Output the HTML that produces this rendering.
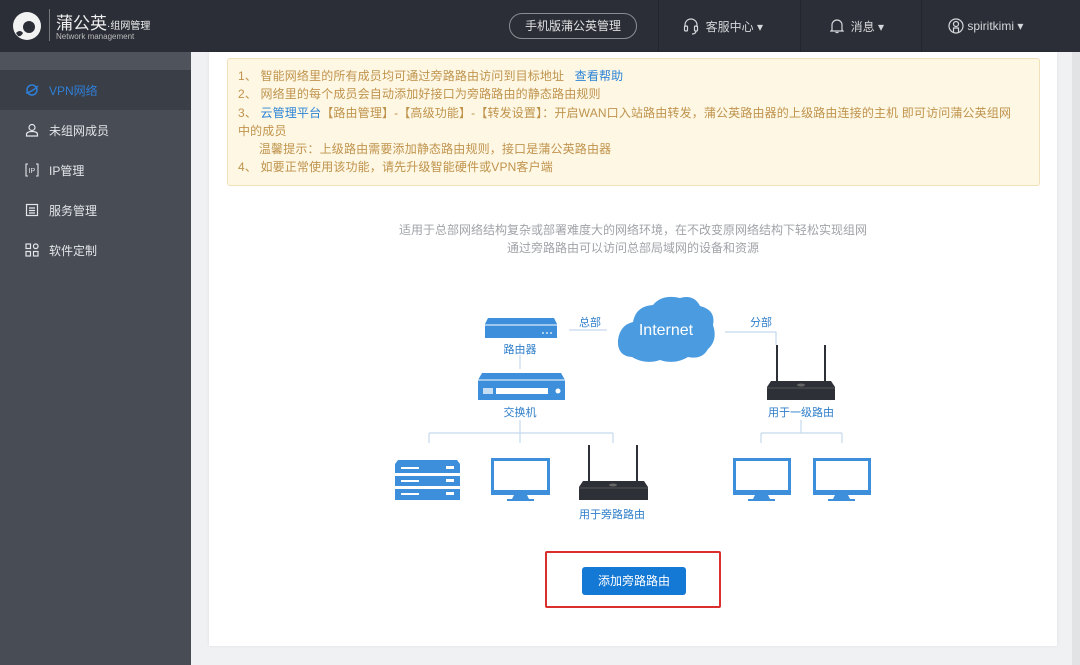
<!DOCTYPE html>
<html><head><meta charset="utf-8"><style>
*{margin:0;padding:0;box-sizing:border-box}
body{width:1080px;height:665px;overflow:hidden;background:#f0f1f3;font-family:"Liberation Sans","Noto Sans CJK SC",sans-serif;position:relative}
.hdr{position:absolute;left:0;top:0;width:1080px;height:52px;background:#2b2e37}
.side{position:absolute;left:0;top:52px;width:191px;height:613px;background:#474c55}
.side .strip{height:18px;background:#4f545c}
.item{height:40px;display:flex;align-items:center;padding-left:25px;color:#e4e6e9;font-size:12px}
.item.act{background:#3a3e46;color:#2f7fd8}
.item svg{margin-right:10px}
.card{position:absolute;left:209px;top:52px;width:848px;height:594px;background:#fff;box-shadow:0 0 3px rgba(0,0,0,.08)}
.note{position:absolute;left:227px;top:58px;width:813px;height:128px;background:#fdf7e4;border:1px solid #f1e1b8;border-radius:3px;padding:8px 10px;font-size:12px;line-height:18.3px;color:#c0934c;white-space:nowrap;letter-spacing:0.15px}
.note a{color:#2c84d6}
.desc{position:absolute;left:209px;width:848px;text-align:center;font-size:12px;color:#a0a3a8}
.lbl{position:absolute;font-size:11px;color:#2e7ec9;transform:translateX(-50%);white-space:nowrap}
.btn{position:absolute;left:582px;top:567px;width:104px;height:28px;background:#1479d5;border-radius:3px;color:#fff;font-size:12px;text-align:center;line-height:28px}
.red{position:absolute;left:545px;top:551px;width:176px;height:57px;border:2px solid #d9302e;border-radius:2px}
.nav{position:absolute;top:0;height:52px;display:flex;align-items:center;color:#d5d7da;font-size:12px}
.sep{position:absolute;top:0;width:1px;height:52px;background:#24262d}
</style></head><body>
<div class="hdr">
  <svg style="position:absolute;left:12px;top:11px" width="30" height="30" viewBox="0 0 30 30"><circle cx="15" cy="15" r="14" fill="#f2f2f2"/><circle cx="17" cy="16" r="6" fill="#2b2e37"/><path d="M4 22 Q8 18 11 22 Q9 26 6 25Z" fill="#2b2e37"/></svg>
  <div style="position:absolute;left:49px;top:9px;width:1px;height:32px;background:#777"></div>
  <div style="position:absolute;left:56px;top:9px;color:#eee;font-size:17px">蒲公英<span style="font-size:10px">·组网管理</span></div>
  <div style="position:absolute;left:56px;top:32px;color:#bbb;font-size:8px">Network management</div>
  <div style="position:absolute;left:509px;top:13px;width:128px;height:26px;border:1px solid #8a8c91;border-radius:13px;color:#e0e0e0;font-size:12px;text-align:center;line-height:24px">手机版蒲公英管理</div>
  <div class="sep" style="left:658px"></div><div class="sep" style="left:800px"></div><div class="sep" style="left:921px"></div>
  <div class="nav" style="left:683px"><svg width="16" height="18" viewBox="0 0 16 18" fill="none" stroke="#d5d7da" stroke-width="1.2"><path d="M2 10V8a6 6 0 0 1 12 0v2"/><rect x="1.5" y="9" width="3" height="5" rx="1"/><rect x="11.5" y="9" width="3" height="5" rx="1"/><path d="M13 14q0 3-4 3"/></svg>&nbsp;&nbsp;客服中心 ▾</div>
  <div class="nav" style="left:830px"><svg width="14" height="16" viewBox="0 0 14 16" fill="none" stroke="#d5d7da" stroke-width="1.2"><path d="M2 12V7a5 5 0 0 1 10 0v5l1 1H1z"/><path d="M5.5 14.5h3"/></svg>&nbsp;&nbsp;消息 ▾</div>
  <div class="nav" style="left:948px"><svg width="16" height="16" viewBox="0 0 16 16" fill="none" stroke="#d5d7da" stroke-width="1.2"><circle cx="8" cy="8" r="7"/><circle cx="8" cy="6" r="2.5"/><path d="M5.5 14V10h5v4"/></svg>&nbsp;spiritkimi ▾</div>
</div>
<div class="side">
  <div class="strip"></div>
  <div class="item act"><svg width="14" height="14" viewBox="0 0 14 14" fill="none" stroke="#2f7fd8" stroke-width="1.5"><circle cx="7" cy="7" r="5"/><path d="M1 10Q7 9 13 3"/></svg>VPN网络</div>
  <div class="item"><svg width="14" height="14" viewBox="0 0 14 14" fill="none" stroke="#e4e6e9" stroke-width="1.2"><circle cx="7" cy="4.5" r="3"/><path d="M1.5 13v-1.5q0-3 5.5-3t5.5 3V13z"/></svg>未组网成员</div>
  <div class="item"><svg width="14" height="14" viewBox="0 0 14 14" fill="none" stroke="#e4e6e9" stroke-width="1.1"><path d="M3 1H1v12h2M11 1h2v12h-2"/><text x="3.5" y="10" font-size="7" fill="#e4e6e9" stroke="none">IP</text></svg>IP管理</div>
  <div class="item"><svg width="14" height="14" viewBox="0 0 14 14" fill="none" stroke="#e4e6e9" stroke-width="1.2"><rect x="1.5" y="1.5" width="11" height="11"/><path d="M4 5h6M4 7.5h6M4 10h6"/></svg>服务管理</div>
  <div class="item"><svg width="14" height="14" viewBox="0 0 14 14" fill="none" stroke="#e4e6e9" stroke-width="1.2"><rect x="1" y="1" width="4.5" height="4.5"/><rect x="8.5" y="1" width="4.5" height="4.5" rx="2"/><rect x="1" y="8.5" width="4.5" height="4.5"/><rect x="8.5" y="8.5" width="4.5" height="4.5"/></svg>软件定制</div>
</div>
<div style="position:absolute;left:1072px;top:52px;width:8px;height:613px;background:#e2e3e5"></div>
<div class="card"></div>
<div class="note">
1、 智能网络里的所有成员均可通过旁路路由访问到目标地址 &nbsp;&nbsp;<a>查看帮助</a><br>
2、 网络里的每个成员会自动添加好接口为旁路路由的静态路由规则<br>
3、 <a>云管理平台</a>【路由管理】-【高级功能】-【转发设置】：开启WAN口入站路由转发，蒲公英路由器的上级路由连接的主机 即可访问蒲公英组网<br>中的成员<br>
&nbsp;&nbsp;&nbsp;&nbsp;&nbsp;&nbsp;温馨提示：上级路由需要添加静态路由规则，接口是蒲公英路由器<br>
4、 如要正常使用该功能，请先升级智能硬件或VPN客户端
</div>
<div class="desc" style="top:221px">适用于总部网络结构复杂或部署难度大的网络环境，在不改变原网络结构下轻松实现组网</div>
<div class="desc" style="top:239px">通过旁路路由可以访问总部局域网的设备和资源</div>
<svg style="position:absolute;left:0;top:0" width="1080" height="665">
 <g stroke="#c5d9ec" stroke-width="1.2" fill="none">
  <path d="M569 330H607M725 332H776V345M520 355V369M520 420V433M429 433H613M429 433V443M520 433V443M613 433V443M801 420V433M761 433H842M761 433V443M842 433V443"/>
 </g>
 <path d="M488 318H554L557 324V338H485V324Z" fill="#3d8fdb"/><path d="M485 325H557" stroke="#fff" stroke-width="1"/>
 <circle cx="543" cy="333" r=".9" fill="#fff"/><circle cx="547" cy="333" r=".9" fill="#fff"/><circle cx="551" cy="333" r=".9" fill="#fff"/>
 <path d="M482 373H561L565 380V400H478V380Z" fill="#3d8fdb"/><path d="M478 380H565" stroke="#fff"/>
 <rect x="496" y="388" width="52" height="6" fill="#fff"/><circle cx="558" cy="391" r="2.5" fill="#fff"/>
 <rect x="483" y="388" width="10" height="6" fill="#fff" opacity=".7"/>
 <path d="M632 357Q617 356 618 340Q620 325 633 322Q636 306 653 305Q662 294 680 298Q694 294 700 306Q716 310 713 325Q718 340 708 349Q702 360 688 357Q675 365 660 360Q645 365 632 357Z" fill="#4a9be0"/>
 <text x="666" y="335" font-size="16" fill="#fff" text-anchor="middle" font-family="Liberation Sans">Internet</text>
 <g fill="#2d3036"><rect x="776" y="345" width="2" height="38"/><rect x="824" y="345" width="2" height="38"/><path d="M771 381H831L835 387V400H767V387Z"/></g>
 <path d="M767 388H835" stroke="#555"/><ellipse cx="801" cy="385" rx="4" ry="1.5" fill="#666"/>
 <g fill="#2d3036"><rect x="588" y="445" width="2" height="38"/><rect x="636" y="445" width="2" height="38"/><path d="M583 481H644L648 487V500H579V487Z"/></g>
 <path d="M579 488H648" stroke="#555"/><ellipse cx="613" cy="485" rx="4" ry="1.5" fill="#666"/>
 <path d="M398 460H457L460 464V473H395V464Z" fill="#3d8fdb"/><rect x="395" y="476" width="65" height="10" fill="#3d8fdb"/><rect x="395" y="489" width="65" height="11" fill="#3d8fdb"/>
 <g fill="#fff"><rect x="401" y="467" width="18" height="2"/><rect x="401" y="480" width="18" height="2"/><rect x="401" y="493" width="18" height="2"/><rect x="446" y="466" width="8" height="3"/><rect x="446" y="479" width="8" height="3"/><rect x="446" y="492" width="8" height="3"/></g>
 <g fill="#3d8fdb">
  <path d="M491 458h59v37h-59z M494 461v29h53v-29z" fill-rule="evenodd"/><path d="M514 495h13l2 4h5v2h-27v-2h5z"/>
  <path d="M733 458h58v37h-58z M736 461v29h52v-29z" fill-rule="evenodd"/><path d="M755 495h13l2 4h5v2h-27v-2h5z"/>
  <path d="M813 458h58v37h-58z M816 461v29h52v-29z" fill-rule="evenodd"/><path d="M835 495h13l2 4h5v2h-27v-2h5z"/>
 </g>
</svg>
<div class="lbl" style="left:590px;top:314px">总部</div>
<div class="lbl" style="left:761px;top:314px">分部</div>
<div class="lbl" style="left:520px;top:341px">路由器</div>
<div class="lbl" style="left:520px;top:404px">交换机</div>
<div class="lbl" style="left:801px;top:404px">用于一级路由</div>
<div class="lbl" style="left:612px;top:506px">用于旁路路由</div>
<div class="red"></div>
<div class="btn">添加旁路路由</div>
</body></html>
